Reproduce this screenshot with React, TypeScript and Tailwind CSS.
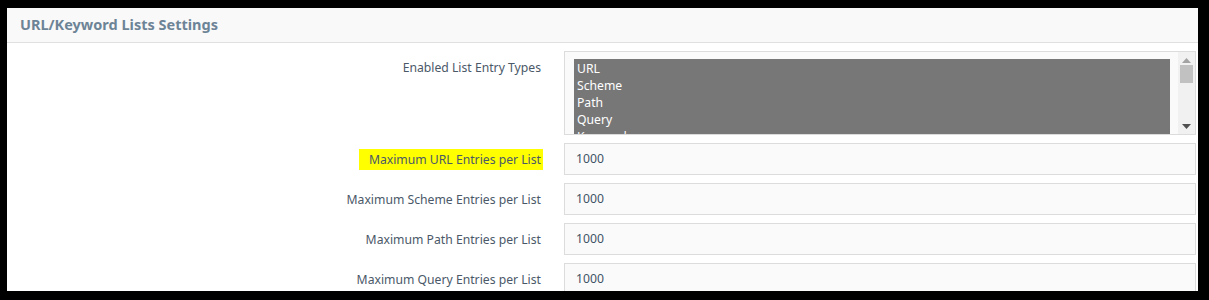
import React from "react";

const font = { fontFamily: '"Noto Sans", "DejaVu Sans", sans-serif' };

function Row({ label, value, highlight }: { label: string; value: string; highlight?: boolean }) {
  return (
    <div className="flex items-center h-[40px]">
      <div className="w-[536px] flex justify-end">
        <span
          className={
            "text-[12.2px] leading-[21px] text-[#4a5868] pr-[2px] " +
            (highlight ? "bg-[#ffff00] pl-[10px]" : "")
          }
        >
          {label}
        </span>
      </div>
      <div className="ml-[21px] mr-[2px] flex-1 h-[32px] border border-[#dcdcdc] bg-[#fafafa] flex items-center pl-[11px] text-[12.2px] text-[#3f5366]">
        {value}
      </div>
    </div>
  );
}

export default function App() {
  return (
    <div className="w-[1209px] h-[300px] bg-black pt-[8px] pl-[7px] pr-[11px] pb-[9px]" style={font}>
      <div className="bg-white h-full overflow-hidden">
        <div className="h-[35px] bg-[#f9f9f9] border-b border-[#e0e0e0] flex items-center pl-[13px]">
          <span className="text-[14.5px] font-bold text-[#6d8497]">URL/Keyword Lists Settings</span>
        </div>
        <div className="flex pt-[8px] h-[96px]">
          <div className="w-[536px] flex justify-end pt-[6px]">
            <span className="text-[12.2px] leading-[21px] text-[#4a5868] pr-[2px]">Enabled List Entry Types</span>
          </div>
          <div className="ml-[21px] mr-[2px] flex-1 h-[84px] border border-[#dcdcdc] bg-[#fafafa] flex pl-[9px] pt-[7px] overflow-hidden">
            <div className="flex-1 bg-[#777777] text-white text-[12.2px] leading-[17px] pl-[3px] pt-[1px] overflow-hidden">
              <div>URL</div>
              <div>Scheme</div>
              <div>Path</div>
              <div>Query</div>
              <div>Keyword</div>
            </div>
            <div className="w-[8px]" />
            <div className="w-[17px] -mt-[7px] h-[83px] bg-[#f1f1f1] flex flex-col items-center justify-between py-[6px]">
              <svg width="9" height="5" viewBox="0 0 9 5">
                <polygon points="0,5 4.5,0 9,5" fill="#a3a3a3" />
              </svg>
              <div className="w-[13px] h-[18px] bg-[#c1c1c1] -mt-[40px]" />
              <svg width="9" height="5" viewBox="0 0 9 5">
                <polygon points="0,0 4.5,5 9,0" fill="#505050" />
              </svg>
            </div>
          </div>
        </div>
        <Row label="Maximum URL Entries per List" value="1000" highlight />
        <Row label="Maximum Scheme Entries per List" value="1000" />
        <Row label="Maximum Path Entries per List" value="1000" />
        <Row label="Maximum Query Entries per List" value="1000" />
      </div>
    </div>
  );
}
